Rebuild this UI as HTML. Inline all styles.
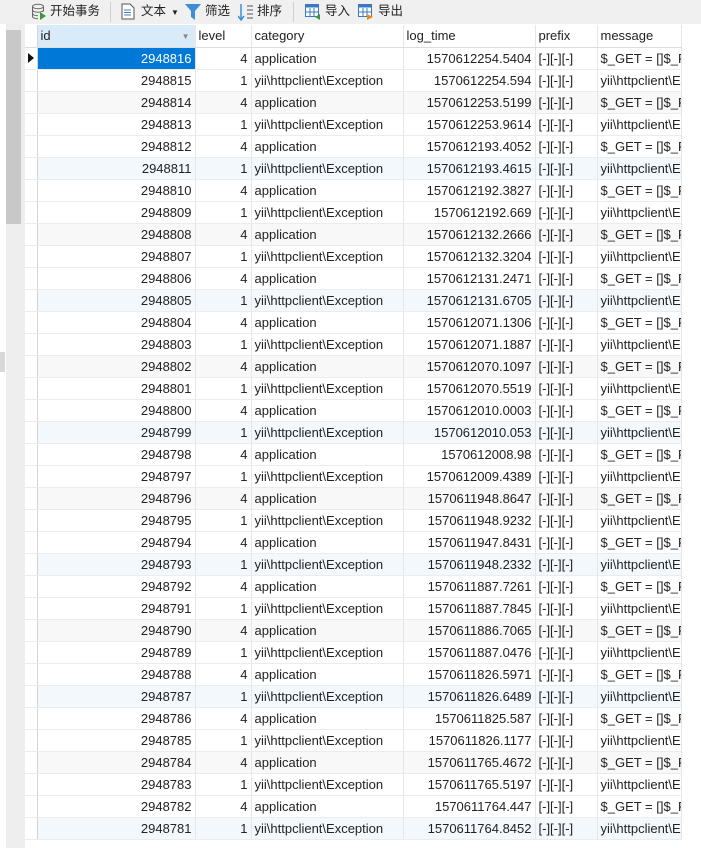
<!DOCTYPE html>
<html><head><meta charset="utf-8"><style>
*{margin:0;padding:0;box-sizing:border-box}
body{width:701px;height:848px;background:#fff;font-family:"Liberation Sans","Noto Sans CJK SC",sans-serif;font-size:13px;color:#222;position:relative;overflow:hidden}
.tb{position:absolute;left:0;top:0;width:701px;height:24px;background:#f0f0f0}
.tb span{position:absolute;top:2px;font-size:12.5px;color:#222;line-height:18px}
.sep{position:absolute;top:2px;width:1px;height:20px;background:#d0d0d0}
.lstrip{position:absolute;left:6px;top:24px;width:19px;height:824px;background:#eeeeee}
.thumb{position:absolute;left:6px;top:30px;width:15px;height:194px;background:#c8c8c8}
.mini{position:absolute;left:0;top:352px;width:5px;height:20px;background:#d8d8d8}
table{position:absolute;left:25px;top:25px;border-collapse:collapse;table-layout:fixed;width:656px}
tr{height:22px}
td{height:22px;border-right:1px solid #e6e6e6;border-bottom:1px solid #ececec;padding:0 3px;white-space:nowrap;overflow:hidden;line-height:21px;vertical-align:middle}
td.r{text-align:right}
td.ind{border-right:1px solid #d4d4d4;padding:0;background:#fff;position:relative}
td.ind svg{position:absolute;left:0;top:0;display:block}
tr.h td{background:#fff;color:#222;border-bottom:1px solid #dedede}
tr.h td.sel{background:#d9ebf9;position:relative}
tr.g td{background:#f8f8f8}
tr.b td{background:#f3f8fd}
tr.g td.ind,tr.b td.ind{background:#fff}
td.cur{background:#0078d7!important;color:#fff}
</style></head><body>
<div class="tb">
<svg style="position:absolute;left:31px;top:3px" width="16" height="18" viewBox="0 0 16 18"><ellipse cx="7" cy="3.5" rx="5.5" ry="2.2" fill="none" stroke="#666"/><path d="M1.5 3.5v10c0 1.2 2.5 2.2 5.5 2.2M12.5 3.5v5M1.5 7c0 1.2 2.5 2.2 5.5 2.2s5.5-1 5.5-2.2M1.5 10.5c0 1.2 2.5 2.2 5.5 2.2" fill="none" stroke="#666"/><path d="M9 9l6 4-6 4z" fill="#3a9a3a"/></svg>
<span style="left:50px">开始事务</span>
<div class="sep" style="left:110px"></div>
<svg style="position:absolute;left:121px;top:3px" width="14" height="17" viewBox="0 0 14 17"><path d="M1 1h8l4 4v11H1z" fill="#fff" stroke="#555"/><path d="M3 7h7M3 9.5h7M3 12h7" stroke="#4a7fc0"/></svg>
<span style="left:141px">文本</span><span style="left:171px;font-size:8px;top:4px">▼</span>
<svg style="position:absolute;left:185px;top:4px" width="16" height="16" viewBox="0 0 16 16"><path d="M0 0h16l-6 7v9l-4-3V7z" fill="#3c8fd6"/></svg>
<span style="left:205px">筛选</span>
<svg style="position:absolute;left:238px;top:3px" width="16" height="18" viewBox="0 0 16 18"><path d="M3 1v15M0 13l3 4 3-4" stroke="#3c8fd6" fill="none" stroke-width="1.5"/><path d="M9 3h6M9 7h6M9 11h6M9 15h6" stroke="#555"/></svg>
<span style="left:257px">排序</span>
<div class="sep" style="left:293px"></div>
<svg style="position:absolute;left:305px;top:4px" width="16" height="16" viewBox="0 0 16 16"><rect x="0.5" y="0.5" width="13" height="12" fill="#fff" stroke="#3a78c2"/><rect x="0.5" y="0.5" width="13" height="3" fill="#3a78c2"/><path d="M5 4v9M9 4v9M1 8h12" stroke="#3a78c2"/><path d="M15 10l-5 3 5 3z" fill="#3a9a3a"/></svg>
<span style="left:325px">导入</span>
<svg style="position:absolute;left:358px;top:4px" width="16" height="16" viewBox="0 0 16 16"><rect x="0.5" y="0.5" width="13" height="12" fill="#fff" stroke="#3a78c2"/><rect x="0.5" y="0.5" width="13" height="3" fill="#3a78c2"/><path d="M5 4v9M9 4v9M1 8h12" stroke="#3a78c2"/><path d="M9 10l6 3-6 3z" fill="#e88a1a"/></svg>
<span style="left:378px">导出</span>
</div>
<div class="lstrip"></div><div class="thumb"></div><div class="mini"></div>
<table>
<colgroup><col style="width:12px"><col style="width:158px"><col style="width:56px"><col style="width:152px"><col style="width:132px"><col style="width:62px"><col style="width:84px"></colgroup>
<tr class="h"><td class="ind"></td><td class="sel">id<span style="position:absolute;right:5px;top:1px;font-size:8px;color:#888">▼</span></td><td>level</td><td>category</td><td>log_time</td><td>prefix</td><td>message</td></tr>
<tbody id="b"></tbody>
</table>
<script>
var d=[["2948816","1570612254.5404"],["2948815","1570612254.594"],["2948814","1570612253.5199"],["2948813","1570612253.9614"],["2948812","1570612193.4052"],["2948811","1570612193.4615"],["2948810","1570612192.3827"],["2948809","1570612192.669"],["2948808","1570612132.2666"],["2948807","1570612132.3204"],["2948806","1570612131.2471"],["2948805","1570612131.6705"],["2948804","1570612071.1306"],["2948803","1570612071.1887"],["2948802","1570612070.1097"],["2948801","1570612070.5519"],["2948800","1570612010.0003"],["2948799","1570612010.053"],["2948798","1570612008.98"],["2948797","1570612009.4389"],["2948796","1570611948.8647"],["2948795","1570611948.9232"],["2948794","1570611947.8431"],["2948793","1570611948.2332"],["2948792","1570611887.7261"],["2948791","1570611887.7845"],["2948790","1570611886.7065"],["2948789","1570611887.0476"],["2948788","1570611826.5971"],["2948787","1570611826.6489"],["2948786","1570611825.587"],["2948785","1570611826.1177"],["2948784","1570611765.4672"],["2948783","1570611765.5197"],["2948782","1570611764.447"],["2948781","1570611764.8452"]];
var h="";d.forEach(function(r,i){var o=i%2==0;var c=(i%3==2)?((i%6==2)?"g":"b"):"";
h+='<tr class="'+c+'"><td class="ind">'+(i==0?'<svg width="12" height="20" viewBox="0 0 12 20"><path d="M3 5l6 5-6 5z" fill="#111"/></svg>':'')+'</td><td class="r'+(i==0?' cur':'')+'">'+r[0]+'</td><td class="r">'+(o?4:1)+'</td><td>'+(o?'application':'yii\\httpclient\\Exception')+'</td><td class="r">'+r[1]+'</td><td>[-][-][-]</td><td>'+(o?'$_GET = []$_POST':'yii\\httpclient\\Exception')+'</td></tr>';});
document.getElementById("b").innerHTML=h;
</script>
</body></html>
